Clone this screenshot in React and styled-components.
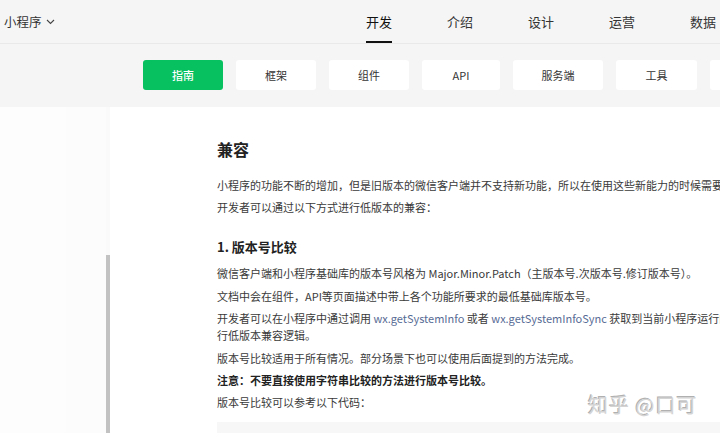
import React from "react";
import styled, { createGlobalStyle } from "styled-components";

const GlobalStyle = createGlobalStyle`
  html, body {
    margin: 0;
    padding: 0;
    background: #f5f5f5;
  }
  body {
    font-family: "Noto Sans CJK SC", "Noto Sans", sans-serif;
    color: #333;
  }
`;

const Page = styled.div`
  position: relative;
  width: 720px;
  height: 433px;
  display: flex;
  flex-direction: column;
  overflow: hidden;
  background: #f5f5f5;
`;

const Header = styled.div`
  height: 44px;
  flex-shrink: 0;
  display: flex;
  align-items: stretch;
  padding-left: 4px;
  border-bottom: 1px solid #e9e9e9;
  box-sizing: border-box;
`;

const Brand = styled.div`
  width: 48px;
  display: flex;
  align-items: center;
  gap: 4px;
  font-size: 12.5px;
  color: #333;
  white-space: nowrap;

  svg {
    flex-shrink: 0;
  }
`;

const Nav = styled.div`
  display: flex;
  gap: 55px;
  margin-left: 314px;
`;

const NavItem = styled.div`
  position: relative;
  display: flex;
  align-items: center;
  font-size: 13px;
  color: ${(p) => (p.$active ? "#111" : "#333")};
  white-space: nowrap;

  &::after {
    content: "";
    display: ${(p) => (p.$active ? "block" : "none")};
    position: absolute;
    left: 0;
    right: 0;
    bottom: 0;
    height: 2px;
    background: #111;
  }
`;

const SubNav = styled.div`
  height: 63px;
  flex-shrink: 0;
  display: flex;
  gap: 13px;
  padding: 16px 0 0 143px;
  box-sizing: border-box;
`;

const Tab = styled.div`
  width: ${(p) => p.$w}px;
  flex-shrink: 0;
  height: 30px;
  display: flex;
  align-items: center;
  justify-content: center;
  border-radius: 3px;
  font-size: 11px;
  background: ${(p) => (p.$active ? "#07c160" : "#fff")};
  color: ${(p) => (p.$active ? "#fff" : "#353535")};
  font-weight: ${(p) => (p.$active ? 500 : 400)};
`;

const Body = styled.div`
  flex: 1;
  display: flex;
  min-height: 0;
`;

const Sidebar = styled.div`
  width: 110px;
  flex-shrink: 0;
  display: flex;
`;

const SideInner = styled.div`
  width: 66px;
  background: #fdfdfd;
`;

const SideOuter = styled.div`
  flex: 1;
  background: #fcfcfc;
`;

const ScrollTrack = styled.div`
  width: 4px;
  flex-shrink: 0;
  background: #fafafa;
  display: flex;
  flex-direction: column;
  padding-top: 148px;
  box-sizing: border-box;
`;

const ScrollThumb = styled.div`
  flex: 1;
  background: #c2c2c2;
`;

const Content = styled.div`
  flex: 1;
  background: #fff;
  padding: 29px 0 0 107px;
  overflow: hidden;
`;

const Article = styled.div`
  width: 720px;
  white-space: nowrap;
`;

const Title = styled.h1`
  margin: 0 0 15px;
  font-size: 16px;
  line-height: 26px;
  font-weight: 700;
  color: #222;
`;

const SubTitle = styled.h2`
  margin: 21px 0 8px;
  font-size: 13px;
  line-height: 20px;
  font-weight: 700;
  color: #222;
`;

const Para = styled.p`
  margin: 0 0 5.4px;
  font-size: 11px;
  line-height: 17px;
  color: ${(p) => (p.$strong ? "#222" : "#3a3a3a")};
  font-weight: ${(p) => (p.$strong ? 700 : 400)};
`;

const Link = styled.span`
  color: #576b95;
`;

const CodeBlock = styled.div`
  margin-top: 11px;
  height: 60px;
  background: #f7f7f7;
`;

const Watermark = styled.div`
  position: absolute;
  left: 588px;
  top: 390px;
  font-size: 20px;
  letter-spacing: 1px;
  color: #d4d4d4;
  text-shadow: 1px 1px 0 #fff, -1px -1px 0 #b0b0b0;
  white-space: nowrap;
`;

const navItems = ["开发", "介绍", "设计", "运营", "数据"];

const tabs = [
  { label: "指南", w: 80, active: true },
  { label: "框架", w: 80 },
  { label: "组件", w: 80 },
  { label: "API", w: 78 },
  { label: "服务端", w: 90 },
  { label: "工具", w: 81 },
  { label: "云开发", w: 80 },
];

export default function App() {
  return (
    <>
      <GlobalStyle />
      <Page>
        <Header>
          <Brand>
            小程序
            <svg width="9" height="6" viewBox="0 0 9 6" fill="none">
              <path d="M1 1l3.5 3.5L8 1" stroke="#444" strokeWidth="1.1" />
            </svg>
          </Brand>
          <Nav>
            {navItems.map((n, i) => (
              <NavItem key={n} $active={i === 0}>
                {n}
              </NavItem>
            ))}
          </Nav>
        </Header>
        <SubNav>
          {tabs.map((t) => (
            <Tab key={t.label} $w={t.w} $active={t.active}>
              {t.label}
            </Tab>
          ))}
        </SubNav>
        <Body>
          <Sidebar>
            <SideInner />
            <SideOuter />
            <ScrollTrack>
              <ScrollThumb />
            </ScrollTrack>
          </Sidebar>
          <Content>
            <Article>
              <Title>兼容</Title>
              <Para>
                小程序的功能不断的增加，但是旧版本的微信客户端并不支持新功能，所以在使用这些新能力的时候需要做兼容。
              </Para>
              <Para>开发者可以通过以下方式进行低版本的兼容：</Para>
              <SubTitle>1. 版本号比较</SubTitle>
              <Para>
                微信客户端和小程序基础库的版本号风格为 Major.Minor.Patch（主版本号.次版本号.修订版本号）。
              </Para>
              <Para>文档中会在组件，API等页面描述中带上各个功能所要求的最低基础库版本号。</Para>
              <Para>
                开发者可以在小程序中通过调用 <Link>wx.getSystemInfo</Link> 或者{" "}
                <Link>wx.getSystemInfoSync</Link> 获取到当前小程序运行的基础库的版本号，通过版本号比较的方式进
                <br />
                行低版本兼容逻辑。
              </Para>
              <Para>版本号比较适用于所有情况。部分场景下也可以使用后面提到的方法完成。</Para>
              <Para $strong>注意：不要直接使用字符串比较的方法进行版本号比较。</Para>
              <Para>版本号比较可以参考以下代码：</Para>
              <CodeBlock />
            </Article>
          </Content>
        </Body>
        <Watermark>知乎 @口可</Watermark>
      </Page>
    </>
  );
}
